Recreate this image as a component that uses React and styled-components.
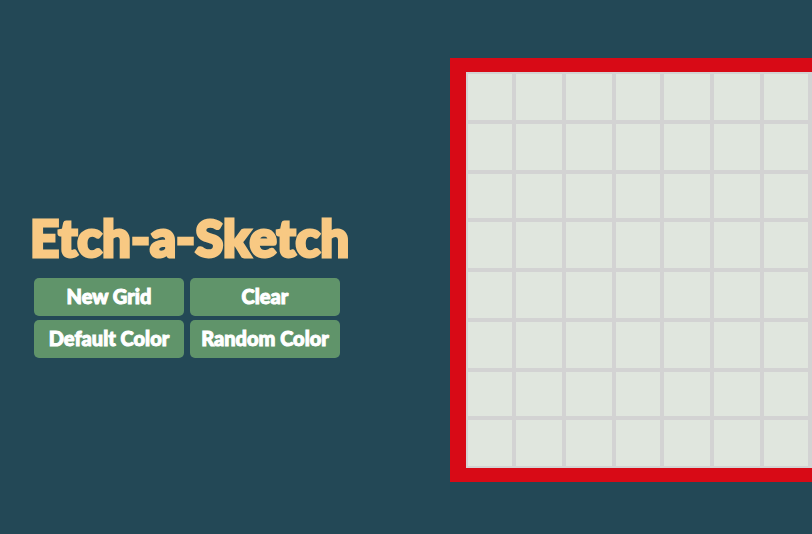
import React, { useState } from "react";
import styled, { createGlobalStyle } from "styled-components";

const GlobalStyle = createGlobalStyle`
  * { box-sizing: border-box; }
  body {
    margin: 0;
    background: #234856;
    font-family: Lato, "Open Sans", sans-serif;
    overflow: hidden;
  }
`;

const Page = styled.main`
  display: flex;
  align-items: center;
  gap: 100px;
  min-height: 100vh;
  padding: 6px 0 0 30px;
`;

const Controls = styled.section`
  flex: 0 0 auto;
  padding-top: 26px;
`;

const Title = styled.h1`
  margin: 0 0 10px;
  color: #f8c983;
  font-size: 51px;
  line-height: 60px;
  font-weight: 900;
  white-space: nowrap;
  -webkit-text-stroke: 3px #f8c983;
`;

const ButtonGrid = styled.div`
  display: grid;
  grid-template-columns: repeat(2, 150px);
  gap: 4px 6px;
  padding: 0 10px 0 4px;
`;

const Button = styled.button`
  height: 38px;
  padding: 0 0 2px;
  border: 0;
  border-radius: 5px;
  background: #60946a;
  color: #fff;
  font: inherit;
  font-size: 20px;
  font-weight: 900;
  white-space: nowrap;
  cursor: pointer;
  -webkit-text-stroke: 1px #fff;
`;

const Frame = styled.section`
  flex: 0 0 auto;
  padding: 14px 16px;
  background: #d80a16;
`;

const Board = styled.div`
  display: grid;
  grid-template-columns: 48px 50px 50px 48px 50px 50px 48px 50px;
  grid-template-rows: 50px 50px 48px 50px 50px 50px 48px 50px;
`;

const Cell = styled.div`
  border: 2px solid #d3d3d3;
  background: ${({ $color }) => $color};
`;

const BLANK = "#e0e6de";
const INK = "#234856";
const blankCells = () => Array(64).fill(BLANK);
const randomColor = () => `hsl(${Math.floor(Math.random() * 360)} 70% 50%)`;

export default function App() {
  const [cells, setCells] = useState(blankCells);
  const [random, setRandom] = useState(false);

  const paint = (index) =>
    setCells((current) =>
      current.map((color, i) => (i === index ? (random ? randomColor() : INK) : color))
    );
  const clear = () => setCells(blankCells());

  return (
    <>
      <GlobalStyle />
      <Page>
        <Controls>
          <Title>Etch-a-Sketch</Title>
          <ButtonGrid>
            <Button type="button" onClick={clear}>New Grid</Button>
            <Button type="button" onClick={clear}>Clear</Button>
            <Button type="button" onClick={() => setRandom(false)}>Default Color</Button>
            <Button type="button" onClick={() => setRandom(true)}>Random Color</Button>
          </ButtonGrid>
        </Controls>
        <Frame aria-label="Drawing board">
          <Board>
            {cells.map((color, i) => (
              <Cell key={i} $color={color} onMouseEnter={() => paint(i)} />
            ))}
          </Board>
        </Frame>
      </Page>
    </>
  );
}
